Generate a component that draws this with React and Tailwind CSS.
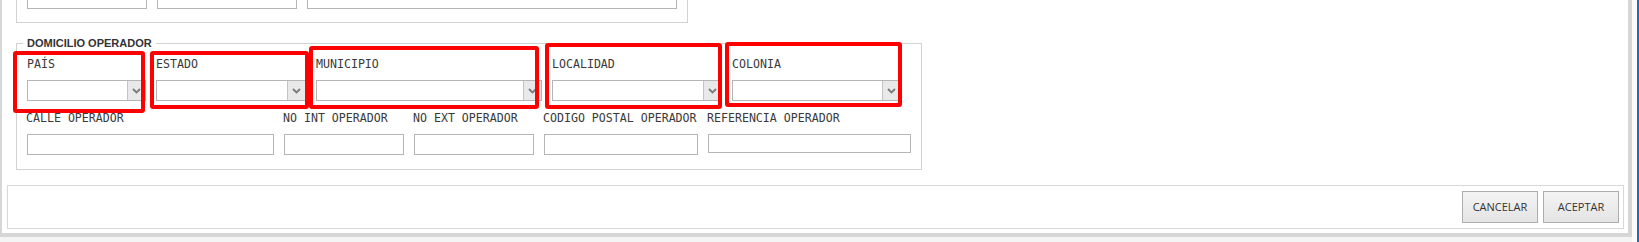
import React from 'react';

const mono = { fontFamily: '"DejaVu Sans Mono", "Liberation Mono", monospace' };

const selects = [
    { label: 'PAÍS', w: 'w-[119px]' },
    { label: 'ESTADO', w: 'w-[150px]' },
    { label: 'MUNICIPIO', w: 'w-[226px]' },
    { label: 'LOCALIDAD', w: 'w-[170px]' },
    { label: 'COLONIA', w: 'w-[169px]' },
];

const inputs = [
    { label: 'CALLE OPERADOR', w: 'w-[247px]', h: 'h-[21px]' },
    { label: 'NO INT OPERADOR', w: 'w-[120px]', h: 'h-[21px]' },
    { label: 'NO EXT OPERADOR', w: 'w-[120px]', h: 'h-[21px]' },
    { label: 'CODIGO POSTAL OPERADOR', w: 'w-[154px]', h: 'h-[21px]' },
    { label: 'REFERENCIA OPERADOR', w: 'w-[203px]', h: 'h-[19px]' },
];

// red annotation frames drawn over the form
const marks = [
    'left-[13px] top-[51px] w-[132px] h-[62px]',
    'left-[150px] top-[51px] w-[159px] h-[58px]',
    'left-[309px] top-[46px] w-[230px] h-[63px]',
    'left-[545px] top-[43px] w-[177px] h-[66px]',
    'left-[725px] top-[42px] w-[177px] h-[65px]',
];

function Chevron() {
    return (
        <svg width="9" height="6" viewBox="0 0 9 6" fill="none">
            <path d="M1 1l3.5 3.5L8 1" stroke="#7a7a7a" strokeWidth="1.8" />
        </svg>
    );
}

function Select({ w }) {
    return (
        <div className={`flex h-[21px] ${w} border border-[#b5b5b5] bg-white`}>
            <div className="flex-1" />
            <div className="flex w-[18px] items-center justify-center border-l border-[#c4c4c4] bg-[#e9e9e9]">
                <Chevron />
            </div>
        </div>
    );
}

function Label({ children }) {
    return (
        <div className="h-[13px] whitespace-pre text-[11.6px] leading-[13px] text-[#3a3a3a]" style={mono}>
            {children}
        </div>
    );
}

export default function App() {
    return (
        <div className="relative flex h-[242px] w-[1639px] overflow-hidden bg-[#f4f4f4]">
            {/* Main panel */}
            <div className="flex h-[237px] w-[1632px] flex-col border-b-4 border-l-2 border-r-4 border-[#d6d6d6] bg-white">
                {/* Previous section (cut off at top) */}
                <div className="ml-[14px] mt-[-40px] flex h-[63px] w-[672px] gap-[10px] border border-[#d2d2d2] pl-[10px] pt-[27px]">
                    <div className="h-[21px] w-[120px] border border-[#b5b5b5]" />
                    <div className="h-[21px] w-[140px] border border-[#b5b5b5]" />
                    <div className="h-[21px] w-[370px] border border-[#b5b5b5]" />
                </div>

                {/* Domicilio operador */}
                <fieldset className="ml-[14px] mt-[14px] h-[133px] w-[905px] border border-[#d2d2d2] px-[10px]">
                    <legend
                        className="-ml-[4px] px-[4px] text-[11px] font-bold leading-[13px] text-[#333]"
                        style={{ fontFamily: '"Liberation Sans", Arial, sans-serif' }}
                    >
                        DOMICILIO OPERADOR
                    </legend>
                    <div className="mt-[8px] flex gap-[10px]">
                        {selects.map((s) => (
                            <div key={s.label} className="flex flex-col gap-[9px]">
                                <Label>{s.label}</Label>
                                <Select w={s.w} />
                            </div>
                        ))}
                    </div>
                    <div className="mt-[11px] flex gap-[10px]">
                        {inputs.map((f) => (
                            <div key={f.label} className="flex flex-col gap-[9px]">
                                <div className="-ml-px">
                                    <Label>{f.label}</Label>
                                </div>
                                <div className={`${f.h} ${f.w} border border-[#b5b5b5] bg-white`} />
                            </div>
                        ))}
                    </div>
                </fieldset>

                {/* Button bar */}
                <div className="ml-[5px] mt-[15px] flex h-[44px] w-[1617px] items-center justify-end gap-[5px] border border-[#d8d8d8] pr-[4px]">
                    {['CANCELAR', 'ACEPTAR'].map((t) => (
                        <button
                            key={t}
                            className="h-[32px] w-[76px] border border-[#adadad] bg-gradient-to-b from-[#f4f4f4] to-[#e4e4e4] text-[11px] text-[#333]"
                            style={{ fontFamily: '"Open Sans", "Noto Sans", sans-serif' }}
                        >
                            {t}
                        </button>
                    ))}
                </div>
            </div>
            <div className="h-full w-[5px] bg-[#fbfbfb]" />
            <div className="h-full w-[2px] bg-[#1b6ec2]" />

            {marks.map((m) => (
                <div key={m} className={`pointer-events-none absolute rounded-[3px] border-4 border-[#ff0000] ${m}`} />
            ))}
        </div>
    );
}
